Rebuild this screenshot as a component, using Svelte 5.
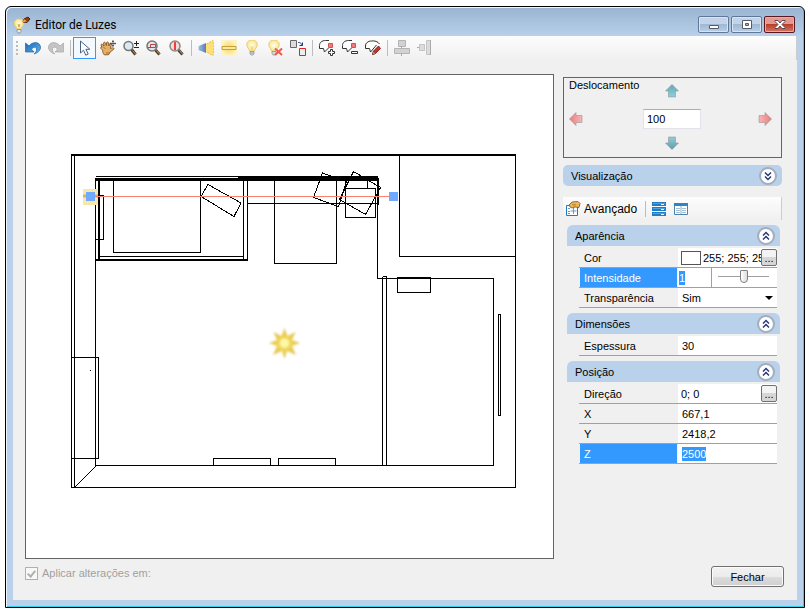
<script>
	const icons = {
		undo: '<path d="M.5 3v9h8.500L6.500 9.300C8 6.800 10.800 6.500 11.400 8.600c.5 2-.4 3.600-2.200 5.400C13 12.900 15.800 10 15.500 7 15 2 8.500.8 4 5.900z" fill="url(#blue)" stroke="#1d69b0" stroke-width=".7"/>',
		redo: '<path d="M15.500 3v9H7L9.500 9.300C8 6.800 5.200 6.500 4.600 8.600c-.5 2 .4 3.600 2.200 5.400C3 12.900.2 10 .5 7 1 2 7.500.8 12 5.900z" fill="#c4c4c4" stroke="#a8a8a8" stroke-width=".7"/>',
		pointer: '<path d="M3.500 1v12l3-2.800 2.300 5 2.400-1.100-2.300-4.800h4z" fill="#fff" stroke="#4a6285"/>',
		hand: '<path d="M1 4.500c1-1 2 .3 3 1.500L3.500 3c.6-1.500 1.700-.8 2 .2l.8 2.300.3-3c.9-1.200 1.800-.4 1.800.5L8.800 6l1.200-2c1.200-.6 1.700.3 1.300 1.400l-1 3 2.400-.6c1.600 0 1.600 1.300.5 1.900l-3 2.300-1.600 2.700-4.200.2C3 13.500 2.500 12 2.700 10.200L1.300 9C0 8.200.5 7.200 1.700 7.300z" fill="#e2b069" stroke="#7a4818" stroke-width=".8"/><path d="M3 6.500L5.500 9M6 13h4" stroke="#a8702f" fill="none"/><path d="M13 0v7M9.500 3.500h6.500M12 1.500h2m-2 4h2m-3-3v2m4-2v2" stroke="#444" stroke-width=".8" fill="none"/>',
		zoom: '<path d="M8.500 9.500l4 5" stroke="#4a3a2a" stroke-width="3"/><path d="M9.500 10.500l3 3.500" stroke="#c99a61"/><circle cx="5.500" cy="6" r="4.500" fill="#dce8f2" stroke="#777" stroke-width="1.500"/><path d="M13.500 1v5M11 3.500h5m-5 4h5" stroke="#222"/>',
		zoomWindow: '<path d="M9.500 10l4 4.500" stroke="#4a3a2a" stroke-width="3"/><path d="M10.500 10.500l3 3.500" stroke="#c99a61"/><circle cx="6" cy="6" r="5" fill="#e1e3e8" stroke="#777" stroke-width="1.500"/><path d="M4.500 4.500h5v3h-5zM2 7.500h5" fill="none" stroke="#b84444"/>',
		zoomAll: '<path d="M9.500 10l4 4.500" stroke="#4a3a2a" stroke-width="3"/><path d="M10.500 10.500l3 3.500" stroke="#c99a61"/><circle cx="6" cy="6" r="5" fill="#f6dada" stroke="#888" stroke-width="1.500"/><path d="M6 3v6M5 3h2M5 9h2" fill="none" stroke="#f03c3c" stroke-width="2"/>',
		spot: '<path d="M6 5.500L15 .5q1.500 7.500 0 15L6 10.500z" fill="#ffdf78" stroke="#edbd33" stroke-dasharray="2 1"/><path d="M.5 6.500Q1 5.500 3 5L8 3v10l-5-2Q1 10.500.5 9.500z" fill="url(#lens)"/>',
		tube: '<path d="M0 0h16v16H0z" fill="url(#glow)"/><path d="M1 6.500h14v3H1z" fill="#fce798" stroke="#c2a03e"/>',
		bulb: '<path d="M8 0C4.500 0 2 2.600 3 5.800 3.500 7.600 5 8.500 5.500 11h5c.5-2.500 2-3.400 2.500-5.200C14 2.600 11.500 0 8 0z" fill="url(#lamp)" stroke="#e8cb70"/><path d="M7 6l1 4 1-4" stroke="#e6c775" stroke-width=".7" fill="none"/><path d="M6 11.500h4v2l-1 1.500H7l-1-1.500zM6 13h4" fill="#d5dce2" stroke="#8a969e" stroke-width=".8"/>',
		bulbOff: '<path d="M7 0C3.500 0 1 2.600 2 5.800 2.500 7.600 4 8.500 4.500 11h5c.5-2.500 2-3.400 2.500-5.200C13 2.600 10.500 0 7 0z" fill="url(#lamp)" stroke="#e8cb70"/><path d="M5 11.500h4v2L8 15H6l-1-1.500z" fill="#d5dce2" stroke="#8a969e" stroke-width=".8"/><path d="M8 8.500l7 6.500m0-6.500L8 15" stroke="#ed5b50" stroke-width="2"/>',
		replace: '<path d="M.5.500h6v7h-6z" fill="#dbdbe5" stroke="#6c6565"/><path d="M9.500 8.500h6v7h-6z" fill="#eee" stroke="#dc2424"/><path d="M8 2.500c2 0 3 0 4 3M9.500 5.500h3v-3" fill="none" stroke="#163f74"/>',
		addVertex: '<path d="M10 .5H6.500C3 .5.500 2.500.500 5.500v3h4l1 3.500 4-4" fill="#fff" stroke="#333"/><path d="M9.500 3.500h4v4h-4z" fill="#f57979" stroke="#c55"/><path d="M11.500 9.500v2h-2v2h2v2h2v-2h2v-2h-2v-2z" fill="#fff" stroke="#333"/>',
		removeVertex: '<path d="M10 .5H6.500C3 .5.500 2.500.500 5.500v3h4l1 3.500 4-4" fill="#fff" stroke="#333"/><path d="M9.500 3.500h4v4h-4z" fill="#f57979" stroke="#c55"/><path d="M9.500 11.500h6v2h-6z" fill="#fff" stroke="#333"/>',
		editShape: '<path d="M14.500 4C13 1.500 9.500.5 6.500 1 3 1 .5 3 .5 6v2.500h4l1 3.500 6-7" fill="#fff" stroke="#333"/><path d="M7.500 14.500l1-3.500 5-5 2 2.500-5 5z" fill="#c73423" stroke="#711" stroke-width=".8"/><path d="M7.500 14.500l1-3.500 2 2.500z" fill="#efb65c" stroke="#633" stroke-width=".6"/>',
		alignMiddle: '<path d="M4.500.500h7v6h-7zM.5 8.500h15v5H.500z" fill="#d2d2d2" stroke="#b4b4b4"/><path d="M7.500 6.500v2m0 5V16" stroke="#aaa"/>',
		alignRight: '<path d="M9.500.500h4v14h-4zM2.500 4.500h5v6h-5z" fill="#dcdcdc" stroke="#c4c4c4"/><path d="M13.500 0v15M0 7.500h2" stroke="#aaa"/>',
	}

	const tools = [
		[
			{ icon: 'undo', title: 'Desfazer' },
			{ icon: 'redo', title: 'Refazer', disabled: true },
		],
		[
			{ icon: 'pointer', title: 'Selecionar', active: true },
			{ icon: 'hand', title: 'Mover' },
			{ icon: 'zoom', title: 'Zoom' },
			{ icon: 'zoomWindow', title: 'Zoom janela' },
			{ icon: 'zoomAll', title: 'Zoom total' },
		],
		[
			{ icon: 'spot', title: 'Spot' },
			{ icon: 'tube', title: 'Linear' },
			{ icon: 'bulb', title: 'Pontual' },
			{ icon: 'bulbOff', title: 'Excluir' },
			{ icon: 'replace', title: 'Substituir' },
		],
		[
			{ icon: 'addVertex', title: 'Adicionar ponto' },
			{ icon: 'removeVertex', title: 'Remover ponto' },
			{ icon: 'editShape', title: 'Editar forma' },
		],
		[
			{ icon: 'alignMiddle', title: 'Centralizar', disabled: true },
			{ icon: 'alignRight', title: 'Alinhar', disabled: true },
		],
	]

	const groups = [
		{
			name: 'Aparência',
			rows: [
				{ id: 'cor', label: 'Cor', type: 'color', value: '255; 255; 255' },
				{ id: 'intensidade', label: 'Intensidade', type: 'slider', value: '1', active: true },
				{ id: 'transparencia', label: 'Transparência', type: 'select', value: 'Sim' },
			],
		},
		{
			name: 'Dimensões',
			rows: [{ id: 'espessura', label: 'Espessura', value: '30' }],
		},
		{
			name: 'Posição',
			rows: [
				{ id: 'direcao', label: 'Direção', type: 'dialog', value: '0; 0' },
				{ id: 'x', label: 'X', value: '667,1' },
				{ id: 'y', label: 'Y', value: '2418,2' },
				{ id: 'z', label: 'Z', value: '2500', active: true },
			],
		},
	]

	// walls and furniture, one pixel wide
	const plan = [
		'M71.5 154v334M74.500 155v332M71 487.500h445M515.500 155v333',
		'M95.500 178v288M95 465.500h399M493.500 278v188M378 278.500h116M377.500 204v75',
		'M74.500 487.500l22-22M71 357.500h28M71 458.500h28M98.500 357v102M90 370.500h1',
		'M96 176.500h143M95 195.500h9M103.500 195v44M95 239.500h9',
		'M113.500 181v71.500h87V181M100 256.500h143M243.500 180v80M247.500 180v81M247 203.500h130',
		'M208 184.500l33 18.500-7 13.500-33-20z',
		'M274.500 180v83.500h62V180',
		'M322.500 173l-9 24.500 25 9 8-25z',
		'M353.500 171.500l27 16-15 27-26-15z',
		'M345.500 188.500h30v29h-30zM345.500 180v8M367.500 180v8',
		'M399.500 155v101.500H515',
		'M382.500 277v188M386.500 276v189M383 276.500h4',
		'M397.500 277v15.500h33V277',
		'M498.500 314.500h2v101h-2z',
		'M213.500 465v-6.500h57v6.500M278.500 465v-6.500h57v6.500',
	]

	let step = '100'
	let level = 50
</script>

{#snippet chevrons(down)}
	<svg class="chevrons" class:down viewBox="0 0 20 20" aria-hidden="true">
		<circle cx="10" cy="10" r="8" fill="#fff" stroke="#a3adbe" stroke-width="2" />
		<path d="M7 9.500l3-3 3 3M7 13.500l3-3 3 3" fill="none" stroke="#253a78" stroke-width="1.500" />
	</svg>
{/snippet}

{#snippet arrow(turn, from, to)}
	<svg width="14" height="14" viewBox="0 0 14 14" aria-hidden="true">
		<linearGradient id="arrow{turn}" x2="0" y2="1">
			<stop stop-color={from} />
			<stop offset="1" stop-color={to} />
		</linearGradient>
		<path d="M7 .500l6.500 6.500h-3v6h-7v-6h-3z" fill="url(#arrow{turn})" stroke="#888" stroke-opacity=".5" transform="rotate({turn} 7 7)" />
	</svg>
{/snippet}

<svg class="defs" width="0" height="0" aria-hidden="true">
	<linearGradient id="blue" x2="1" y2="1"><stop stop-color="#1768b4" /><stop offset="1" stop-color="#67b7ef" /></linearGradient>
	<linearGradient id="lens"><stop stop-color="#9dbce6" /><stop offset="1" stop-color="#5a7fb5" /></linearGradient>
	<radialGradient id="glow"><stop offset=".4" stop-color="#fbe27f" /><stop offset="1" stop-color="#fdf3c6" /></radialGradient>
	<radialGradient id="lamp"><stop stop-color="#fffef0" /><stop offset="1" stop-color="#fbe58c" /></radialGradient>
	<radialGradient id="sun"><stop stop-color="#fff9b0" /><stop offset=".5" stop-color="#ebcf4c" /><stop offset="1" stop-color="#e6bf62" /></radialGradient>
</svg>

<main>
	<div class="window">
		<header>
			<svg width="18" height="18" viewBox="0 0 18 18" aria-hidden="true">
				<path d="M5 3C2 3 0 5 .5 8c.4 2 2 2.500 2.500 5h4c.5-2.500 2.500-3 2.500-5.500C9.500 5 8 3 5 3z" fill="url(#lamp)" stroke="#ecd073" />
				<path d="M4 8l1 3 1-3" fill="none" stroke="#d6a93d" />
				<path d="M3 13.500h4v2L6 17H4l-1-1.500z" fill="#e4e8ea" stroke="#8a98a0" />
				<path d="M9 6l1-3 4-2 2 2-3 3.500z" fill="#8f3d12" stroke="#54240c" />
				<path d="M8.500 6.500L10 3l3 2.500z" fill="#f1a13c" />
			</svg>
			<h1>Editor de Luzes</h1>
			<div class="controls">
				<button aria-label="Minimizar">
					<svg width="14" height="14" viewBox="0 0 14 14"><path d="M2.500 7.500h9v3h-9z" fill="#fff" stroke="#555b69" /></svg>
				</button>
				<button aria-label="Maximizar">
					<svg width="14" height="14" viewBox="0 0 14 14"><path d="M2.500 2.500h9v8h-9zM5.500 5.500h3v2h-3z" fill="#fff" fill-rule="evenodd" stroke="#555b69" /></svg>
				</button>
				<button class="close" aria-label="Fechar janela">
					<svg width="14" height="14" viewBox="0 0 14 14"><path d="M2 2.500h3L7 5l2-2.500h3v1L9 6.500l3 3v1H9L7 8l-2 2.500H2v-1l3-3-3-3z" fill="#fff" stroke="#5a4550" /></svg>
				</button>
			</div>
		</header>

		<div class="client">
			<nav class="toolbar">
				<span class="grip"></span>
				{#each tools as group, i}
					{#if i > 0}<span class="separator"></span>{/if}
					{#each group as tool}
						<button class:active={tool.active} disabled={tool.disabled} aria-label={tool.title}>
							<svg width="16" height="16" viewBox="0 0 16 16">{@html icons[tool.icon]}</svg>
						</button>
					{/each}
				{/each}
			</nav>

			<div class="content">
				<div class="canvas">
					<svg viewBox="26 75 527 483" role="img" aria-label="Planta">
						<g class="lines">
							{#each plan as d}
								<path {d} />
							{/each}
						</g>
						<g class="thick">
							<path d="M71 155h445M95 179.500h284" stroke-width="2" />
							<path d="M95 179.500h144" stroke-width="3" />
							<path d="M238 178.500h140" stroke-width="5" />
							<path d="M99 178v83M96 260h152M378 178v27M397 278h34" stroke-width="2" />
						</g>
						<path d="M83 189h15v16H83z" fill="#f8e7a8" />
						<path d="M83 196h15" stroke="#d3b85c" stroke-width="3" />
						<path d="M86 196.500h307" stroke="#fa8072" />
						<path d="M86 192h9v9h-9zM389 192h9v9h-9z" fill="#70aaff" />
						<path
							class="sun"
							d="M284.500 328l3 8 8-4-3.500 8 8 3-8 3 4 9-9-4-2.500 8-2.500-8-9 4 4-9-8-3 8-3-3.500-8 8 4z"
						/>
						<circle class="core" cx="284.500" cy="343" r="4" />
					</svg>
				</div>

				<aside>
					<fieldset class="shift">
						<label for="step">Deslocamento</label>
						<button class="up" aria-label="Cima">{@render arrow(0, '#62a9b5', '#8fcfdb')}</button>
						<button class="left" aria-label="Esquerda">{@render arrow(-90, '#e58080', '#ffb3b3')}</button>
						<input id="step" bind:value={step} />
						<button class="right" aria-label="Direita">{@render arrow(90, '#e58080', '#ffb3b3')}</button>
						<button class="bottom" aria-label="Baixo">{@render arrow(180, '#5d9ca8', '#8fcfdb')}</button>
					</fieldset>

					<button class="bar view"><span>Visualização</span>{@render chevrons(true)}</button>

					<div class="modes">
						<button class="advanced">
							<svg width="16" height="16" viewBox="0 0 16 16">
								<path d="M1.500 4.500h11v10h-11z" fill="#fff" stroke="#2878bd" />
								<path d="M3 7.500h2M3 10.500h2M3 12.500h2M8.500 7v6m-3-3h6" stroke="#5a9dd5" />
								<path d="M4 4l3-3 6-.5 2 2-1 4-4-.5-3 1-2-1z" fill="#e8b65b" stroke="#815219" stroke-width=".8" />
								<path d="M7 3.500h4M8 5h3" stroke="#b47b2b" stroke-width=".7" />
							</svg>
							Avançado
						</button>
						<span class="separator"></span>
						<button aria-label="Categorias">
							<svg width="14" height="14" viewBox="0 0 14 14">
								<path d="M0 0h14v4H0zM0 5h14v4H0zM0 10h14v4H0z" fill="#207dc4" />
								<path d="M1 1.500h12M1 6.500h12M1 11.500h12" stroke="#4fa3e0" />
								<path d="M9 2.500h3M9 7.500h3M9 12.500h3" stroke="#fff" />
							</svg>
						</button>
						<button aria-label="Lista">
							<svg width="14" height="14" viewBox="0 0 14 14">
								<path d="M.5 1.500h13v11H.500z" fill="#fff" stroke="#4b82ad" />
								<path d="M0 2.500h14" stroke="#2c84cc" stroke-width="3" />
								<path d="M2 6.500h4m2 0h4M2 8.500h4m2 0h4M2 10.500h4m2 0h4" stroke="#a5bfd5" />
								<path d="M7 4v8" stroke="#8fb0ca" />
							</svg>
						</button>
					</div>

					<div class="properties">
						{#each groups as group}
							<section>
								<button class="bar"><span>{group.name}</span>{@render chevrons(false)}</button>
								<div class="rows">
									{#each group.rows as row}
										<div class="row" class:active={row.active}>
											<label for={row.id}>{row.label}</label>
											<div class="value {row.type ?? 'text'}">
												{#if row.type === 'select'}
													<select id={row.id}>
														<option>Sim</option>
														<option>Não</option>
													</select>
												{:else}
													{#if row.type === 'color'}<span class="swatch"></span>{/if}
													<input
														id={row.id}
														value={row.value}
														style:width={row.active ? `${row.value.length}ch` : null}
													/>
												{/if}
												{#if row.type === 'slider'}
													<div class="range">
														<input type="range" aria-label="Nível de intensidade" bind:value={level} />
													</div>
												{/if}
												{#if row.type === 'color' || row.type === 'dialog'}
													<button class="more" aria-label="Editar {row.label}">...</button>
												{/if}
											</div>
										</div>
									{/each}
								</div>
							</section>
						{/each}
					</div>
				</aside>
			</div>

			<footer>
				<label class="apply">
					<input type="checkbox" checked disabled />
					Aplicar alterações em:
				</label>
				<button class="submit">Fechar</button>
			</footer>
		</div>
	</div>
</main>

<style>
	:global(body) {
		margin: 0;
		background: #fff;
	}
	* {
		box-sizing: border-box;
	}
	.defs {
		position: absolute;
	}
	main {
		display: flex;
		min-height: 100vh;
		padding: 6px 5px 7px;
		font-family: 'Liberation Sans', Arial, sans-serif;
		font-size: 11px;
		line-height: 14px;
		color: #000;
	}
	button,
	input,
	select {
		font: inherit;
		color: inherit;
		margin: 0;
		padding: 0;
		border: 0;
		background: none;
	}
	svg {
		display: block;
		flex: none;
	}
	.window {
		flex: 1;
		display: flex;
		flex-direction: column;
		min-width: 0;
		padding: 0 7px 7px;
		border: 1px solid #000;
		border-radius: 6px 6px 0 0;
		background: linear-gradient(#99b4d1, #b9d1ea 30px);
		box-shadow: inset 1px 1px #eef4fb, inset -1px -1px #2fd0e8;
	}
	header {
		display: flex;
		align-items: center;
		height: 29px;
		padding: 6px 2px 0 1px;
	}
	h1 {
		flex: 1;
		margin: 0 0 0 3px;
		font: 12px/16px Roboto, 'Open Sans', sans-serif;
	}
	.controls {
		display: flex;
		gap: 2px;
	}
	.controls button {
		display: grid;
		place-items: center;
		width: 31px;
		height: 17px;
		border: 1px solid #5f7899;
		border-radius: 2px;
		background: linear-gradient(#c3d4e8 48%, #9fb8d4 50%, #b8cfe6);
		box-shadow: inset 0 0 0 1px #d7e4f1;
	}
	.controls .close {
		border-color: #5b1620;
		background: linear-gradient(#e29a90 48%, #b9402a 50%, #d27765);
		box-shadow: inset 0 0 0 1px #e9ada4;
	}
	.client {
		flex: 1;
		display: flex;
		flex-direction: column;
		background: #f0f0f0;
	}
	.toolbar {
		display: flex;
		align-items: center;
		height: 24px;
		background: linear-gradient(#fdfdfd, #f0f0f0);
		border-right: 1px solid #ccc;
	}
	.grip {
		width: 2px;
		height: 14px;
		margin: 0 3px 0 3px;
		background: repeating-linear-gradient(#bbb 0 2px, transparent 2px 4px);
	}
	.toolbar button {
		display: grid;
		place-items: center;
		width: 23px;
		height: 22px;
	}
	.toolbar .active {
		border: 1px solid #3399ff;
		background: #f4f9ff;
	}
	.separator {
		width: 1px;
		height: 16px;
		margin: 0 2px 0 3px;
		background: #bdbdbd;
	}
	.content {
		flex: 1;
		display: flex;
		gap: 9px;
		padding: 14px 15px 0 12px;
	}
	.canvas {
		flex: 1;
		display: flex;
		min-width: 0;
		border: 1px solid #646464;
		background: #fff;
	}
	.canvas svg {
		width: 100%;
		height: 100%;
	}
	.lines,
	.thick {
		fill: none;
		stroke: #000;
		shape-rendering: crispEdges;
	}
	.sun {
		fill: url(#sun);
		filter: blur(1px);
	}
	.core {
		fill: #fdf8a8;
		filter: blur(1px);
	}
	aside {
		width: 219px;
		padding-top: 3px;
	}
	.shift {
		display: grid;
		grid-template: 'label up .' 25px 'left step right' 31px 'left bottom right' 18px / 79px 58px 1fr;
		align-items: center;
		margin: 0;
		padding: 0 0 5px;
		border: 1px solid #646464;
	}
	.shift label {
		grid-area: label;
		align-self: start;
		padding-left: 5px;
	}
	.shift input {
		grid-area: step;
		height: 20px;
		width: 58px;
		min-width: 0;
		padding-left: 3px;
		border: 1px solid #e2e3ea;
		border-top-color: #abadb3;
		background: #fff;
	}
	.shift button {
		justify-self: center;
	}
	.up {
		grid-area: up;
	}
	.shift .left {
		grid-area: left;
		grid-row: 2;
		justify-self: start;
		padding-left: 5px;
	}
	.shift .right {
		grid-area: right;
		grid-row: 2;
		justify-self: end;
		padding-right: 9px;
	}
	.bottom {
		grid-area: bottom;
	}
	.bar {
		display: flex;
		align-items: center;
		justify-content: space-between;
		width: 100%;
		height: 21px;
		padding: 0 4px 0 8px;
		border-radius: 6px 6px 0 0;
		background: #b9d1ea;
	}
	.view {
		margin-top: 7px;
		border-radius: 5px;
	}
	.chevrons {
		width: 20px;
		height: 20px;
	}
	.down {
		transform: rotate(180deg);
	}
	.modes {
		display: flex;
		align-items: center;
		gap: 8px;
		height: 23px;
		margin-top: 11px;
		padding-left: 2px;
		background: linear-gradient(#fdfdfd, #f0f0f0);
		border-right: 1px solid #ccc;
	}
	.modes .separator {
		margin: 0 -2px 0 0;
	}
	.advanced {
		display: flex;
		align-items: center;
		gap: 3px;
		font-size: 12px;
	}
	.properties {
		display: flex;
		flex-direction: column;
		gap: 5px;
		margin: 5px 2px 0 4px;
	}
	.rows {
		padding: 2px 3px 0 12px;
	}
	.row {
		display: flex;
		height: 20px;
		border-bottom: 1px solid #a0a0a0;
	}
	.row > label {
		width: 97px;
		margin-left: 1px;
		padding: 3px 0 0 4px;
	}
	.row.active > label {
		background: #3399ff;
		color: #fff;
	}
	.value {
		position: relative;
		flex: 1;
		display: flex;
		align-items: center;
		min-width: 0;
		margin-left: 1px;
		padding-left: 4px;
		background: #fff;
	}
	.value > input {
		flex: 1;
		min-width: 0;
		height: 14px;
	}
	.row.active .value > input {
		flex: none;
		background: #3399ff;
		color: #fff;
	}
	.color,
	.dialog {
		padding-left: 3px;
	}
	.slider {
		padding-left: 1px;
	}
	.swatch {
		width: 20px;
		height: 14px;
		margin-right: 2px;
		border: 1px solid #555;
		background: #fff;
	}
	.more {
		width: 16px;
		height: 17px;
		border: 1px solid #707070;
		border-radius: 2px;
		background: linear-gradient(#f3f3f3 50%, #d6d6d6 50%);
	}
	.range {
		width: 66px;
		height: 19px;
		margin-left: auto;
		padding: 0 8px 0 6px;
		border-left: 1px solid #a0a0a0;
	}
	.range input {
		display: block;
		width: 100%;
		height: 17px;
		appearance: none;
		background: linear-gradient(#a0a0a0, #a0a0a0) center / 100% 1px no-repeat;
	}
	.range input::-webkit-slider-thumb {
		appearance: none;
		width: 8px;
		height: 13px;
		border: 1px solid #808080;
		border-radius: 1px 1px 4px 4px;
		background: linear-gradient(90deg, #fff, #ddd);
	}
	.select::after {
		content: '';
		position: absolute;
		top: 8px;
		right: 4px;
		border: 4px solid transparent;
		border-top-color: #000;
		border-bottom: 0;
		pointer-events: none;
	}
	select {
		width: 100%;
		appearance: none;
	}
	footer {
		display: flex;
		align-items: flex-start;
		justify-content: space-between;
		padding: 7px 13px 13px 12px;
	}
	.apply {
		display: flex;
		align-items: center;
		gap: 4px;
		color: #a0a0a0;
	}
	.apply input {
		display: grid;
		place-items: center;
		width: 13px;
		height: 13px;
		appearance: none;
		border: 1px solid #b0b0b0;
		background: #f8f8f8;
	}
	.apply input::before {
		content: '';
		width: 3px;
		height: 6px;
		border: solid #b0b0b0;
		border-width: 0 2px 2px 0;
		transform: rotate(40deg);
	}
	.submit {
		width: 73px;
		height: 21px;
		border: 1px solid #707070;
		border-radius: 3px;
		background: linear-gradient(#f2f2f2, #ebebeb 50%, #dddddd 50%, #cfcfcf);
		box-shadow: inset 0 0 0 1px #fbfbfb;
	}
</style>
